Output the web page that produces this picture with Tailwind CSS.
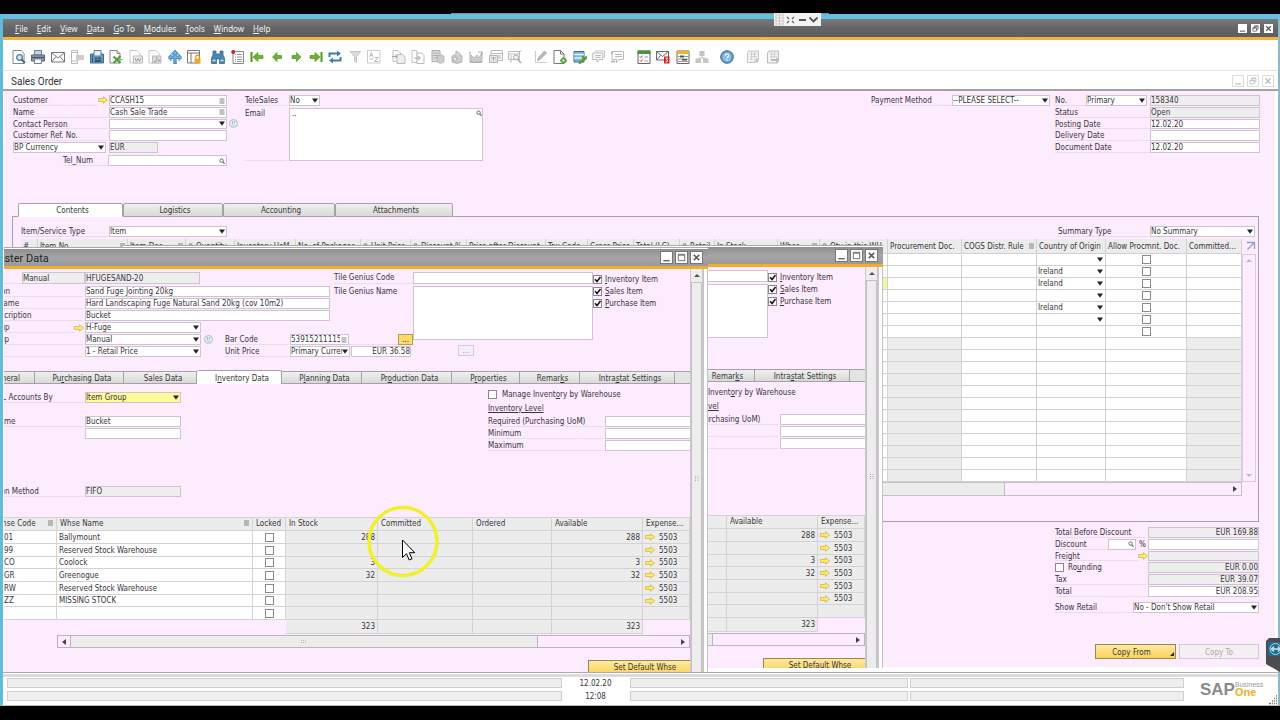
<!DOCTYPE html>
<html lang="en">
<head>
<meta charset="utf-8">
<title>Sales Order - SAP Business One</title>
<script src="https://cdn.jsdelivr.net/npm/@tailwindcss/browser@4"></script>
</head>
<body class="flex min-h-screen flex-col bg-black font-['DejaVu_Sans_Condensed','DejaVu_Sans',sans-serif] text-[8px] leading-[11px] text-[#3a343c]">

<svg class="hidden" aria-hidden="true">
  <symbol id="link" viewBox="0 0 10 8"><path d="M.5 2.500h5V.7L9.500 4 5.500 7.300V5.500h-5z" fill="#fbe96a" stroke="#d3b84a" stroke-width=".8"/></symbol>
  <symbol id="list" viewBox="0 0 5 6"><path d="M0 1h5M0 3h5M0 5h5" stroke="#777" stroke-width=".9"/></symbol>
  <symbol id="mag" viewBox="0 0 7 7"><circle cx="3" cy="3" r="2" fill="none" stroke="#555"/><path d="M4.500 4.500l2 2" stroke="#555" stroke-width="1.200"/></symbol>
  <symbol id="caret" viewBox="0 0 6 5"><path d="M0 .5h6L3 4.800z" fill="#222"/></symbol>
  <symbol id="tick" viewBox="0 0 9 9"><path d="M2 4.300l2 2.200 3.500-4.500" fill="none" stroke="#111" stroke-width="1.500"/></symbol>
  <symbol id="globe" viewBox="0 0 9 9"><circle cx="4.500" cy="4.500" r="4" fill="#e3eef7" stroke="#9cb3c8" stroke-width=".8"/><path d="M3.500 2v3.500M5.500 2v2.500M4 6.500h1.500" stroke="#9cb3c8" stroke-width=".9"/></symbol>
  <symbol id="min" viewBox="0 0 12 12"><path d="M2.500 9.500h7" stroke="#666" stroke-width="1.500"/></symbol>
  <symbol id="max" viewBox="0 0 12 12"><path d="M2.500 2.500h7v7h-7zM2.500 3.500h7" fill="none" stroke="#666"/></symbol>
  <symbol id="rest" viewBox="0 0 12 12"><path d="M2.500 5h5v4.500h-5zM4.500 5V2.500h5v4.500h-2M4.500 3h5M2.500 5.500h5" fill="none" stroke="#555"/></symbol>
  <symbol id="close" viewBox="0 0 12 12"><path d="M3 3l6 6M9 3l-6 6" stroke="#555" stroke-width="1.700"/></symbol>

  <symbol id="i-preview" viewBox="0 0 14 14"><path d="M1 .5h8.500l2.500 3v10H1z" fill="#fff" stroke="#888"/><circle cx="7.500" cy="7.500" r="2.800" fill="#cfe4f0" stroke="#4f7f9c" stroke-width="1.300"/><path d="M9.500 9.500l3.500 3.500" stroke="#3d6d8c" stroke-width="2"/></symbol>
  <symbol id="i-print" viewBox="0 0 14 14"><path d="M3.500.5h7V5h-7z" fill="#bcd9ef" stroke="#6a7f90"/><path d="M.5 5h13v6H.5z" fill="#9aa6b0" stroke="#59656f"/><path d="M1 7.500h12" stroke="#3f5668" stroke-width="1.500"/><path d="M3.500 9h7v4.500h-7z" fill="#fff" stroke="#6a7f90"/></symbol>
  <symbol id="i-mail" viewBox="0 0 14 14"><path d="M.5 2.500h13v9.500H.5zM.5 2.500L7 8l6.500-5.500M.5 12L5 6.500M13.500 12L9 6.500" fill="#fff" stroke="#777"/></symbol>
  <symbol id="i-sms" viewBox="0 0 14 14"><path d="M1.500.5h6v13h-6zM2 2.500h5M2 11h5" fill="#fff" stroke="#bbb"/><path d="M6 5h8v5H9l-2 2v-2H6z" fill="#ccc"/></symbol>
  <symbol id="i-fax" viewBox="0 0 14 14"><path d="M.5 4h13v9H.5z" fill="#6b9cc0" stroke="#3e6d8e"/><path d="M4 .5h7V6H4z" fill="#e8f1f7" stroke="#56809c"/><path d="M2.500 5v7M5 8h2v1H5zM8 8h3v1H8zM5 10.500h6v1H5z" stroke="#2f5873" fill="none"/></symbol>
  <symbol id="i-excel" viewBox="0 0 14 14"><path d="M1 .5h7l3 3v9.500H1z" fill="#fff" stroke="#888"/><path d="M8 .5v3h3" fill="none" stroke="#888"/><path d="M4.500 6.500l7 6.500M11.500 6l-7 7" stroke="#4f9d35" stroke-width="2"/><path d="M9 9.500h4.500" stroke="#7dbb62"/></symbol>
  <symbol id="i-word" viewBox="0 0 14 14"><path d="M1 .5h7l3 3v9.500H1z" fill="#fff" stroke="#c6c6c6"/><path d="M4.500 6h9v7h-9z" fill="#eee" stroke="#bbb"/><path d="M6 8l1.300 3.500L9 8.500l1.500 3L12 8" fill="none" stroke="#999"/></symbol>
  <symbol id="i-pdf" viewBox="0 0 14 14"><path d="M1 .5h7l3 3v9.500H1z" fill="#fff" stroke="#c6c6c6"/><path d="M4.500 6h8.500v7H4.500z" fill="#ddd" stroke="#bbb"/><path d="M6 12c2-1 3-3 2.500-5 .5 2 1.500 3.500 4 3.500-2 0-4 .3-6.500 1.500z" fill="#fff" stroke="#999" stroke-width=".8"/></symbol>
  <symbol id="i-launch" viewBox="0 0 14 14"><path d="M7 0l3.500 4H8.200v2H11V4.500l3 3-3 3V8.500H8.200V14H5.800V8.500H3v2l-3-3 3-3V6h2.800V4H3.500z" fill="#69b1e0" stroke="#2f78a8" stroke-width=".8"/></symbol>
  <symbol id="i-lock" viewBox="0 0 14 14"><path d="M.5.5h12v12.500H.5zM.5 3h12M4 3v10" fill="#fff" stroke="#777"/><path d="M7.500 8.500h6v5h-6z" fill="#f0a91f"/><path d="M8.800 8.500V6.800a1.700 1.700 0 013.400 0v1.700" fill="none" stroke="#e09a10" stroke-width="1.200"/></symbol>
  <symbol id="i-find" viewBox="0 0 14 14"><path d="M2 1h3v3h4V1h3v4l1.500 3v5.500H8.500V9h-3v4.500H.5V8L2 5z" fill="#4a87b5" stroke="#2c5f86" stroke-width=".7"/><path d="M1.500 10.500h3M9.500 10.500h3" stroke="#c9e0f0" stroke-width="1.500"/></symbol>
  <symbol id="i-rows" viewBox="0 0 14 14"><path d="M2 1.500h10.500v12H2z" fill="#fff" stroke="#888"/><path d="M4 4.500h1M6 4.500h5M4 7h1M6 7h5M4 9.500h1M6 9.500h5M4 11.500h1M6 11.500h5" stroke="#999"/><circle cx="2.200" cy="2" r="2" fill="#d02020"/></symbol>
  <symbol id="i-first" viewBox="0 0 14 14"><path d="M1.500 2v10" stroke="#4c9a1f" stroke-width="2"/><path d="M3 7l5-4.500v3h5v3H8v3z" fill="#6db52e" stroke="#43861c" stroke-width=".6"/></symbol>
  <symbol id="i-prev" viewBox="0 0 14 14"><path d="M2.500 7l4.500-4.500v3h4.500v3H7v3z" fill="#6db52e" stroke="#43861c" stroke-width=".6"/></symbol>
  <symbol id="i-next" viewBox="0 0 14 14"><path d="M12 7L7.500 2.500v3H3v3h4.500v3z" fill="#6db52e" stroke="#43861c" stroke-width=".6"/></symbol>
  <symbol id="i-last" viewBox="0 0 14 14"><path d="M12.500 2v10" stroke="#4c9a1f" stroke-width="2"/><path d="M11 7L6 2.500v3H1v3h5v3z" fill="#6db52e" stroke="#43861c" stroke-width=".6"/></symbol>
  <symbol id="i-cycle" viewBox="0 0 14 14"><path d="M1.500 7V3.500h8M12.500 7v3.500h-8" fill="none" stroke="#3f7ea8" stroke-width="2"/><path d="M9 .5l4 3-4 3zM5 7.500l-4 3 4 3z" fill="#3f7ea8"/></symbol>
  <symbol id="i-filter" viewBox="0 0 14 14"><path d="M2 1.500h10.500L8.500 6.500v6l-2-1.500V6.500z" fill="#ddd" stroke="#c2c2c2"/></symbol>
  <symbol id="i-sort" viewBox="0 0 14 14"><path d="M.5.5h12.500v12.500H.5z" fill="#fff" stroke="#ccc"/><path d="M2.500 7l1.800-4.500L6 7M3 5.500h2.500M7.500 7.500h4l-4 4h4M3 9h3" fill="none" stroke="#bbb"/></symbol>
  <symbol id="i-copyfrom" viewBox="0 0 14 14"><path d="M1 .5h5l2.500 2.500v8.500H1z" fill="#fff" stroke="#bbb"/><path d="M5 4.500h5.500l2.500 2.500v6.500H5z" fill="#eee" stroke="#bbb"/><path d="M0 6.500h5M3 4.500l2.500 2L3 8.500" fill="none" stroke="#aaa"/></symbol>
  <symbol id="i-copyto" viewBox="0 0 14 14"><path d="M1 .5h5v12H1z" fill="#fff" stroke="#c4c4c4"/><path d="M6 3h4.500l2.500 2.500v8H6z" fill="#fff" stroke="#bbb"/><path d="M3 8h6M7 6l2.500 2L7 10" fill="none" stroke="#aaa"/></symbol>
  <symbol id="i-calc" viewBox="0 0 14 14"><path d="M1 .5h8v11H1z" fill="#ddd" stroke="#aaa"/><path d="M2.500 3h5M2.500 5.500h5M2.500 8h5" stroke="#aaa"/><path d="M6 6l3.500-1.500L13 6v6l-3.500 1.500L6 12z" fill="#ccc" stroke="#aaa" stroke-width=".7"/></symbol>
  <symbol id="i-bag" viewBox="0 0 14 14"><path d="M2 6l5-2 5 2v6l-5 1.500L2 12z" fill="#ccc" stroke="#b5b5b5"/><path d="M6 4.500V1l4 2.500v3" fill="#ddd" stroke="#b0b0b0" stroke-width="1"/><circle cx="5" cy="9" r="2" fill="#eee" stroke="#aaa"/></symbol>
  <symbol id="i-chart" viewBox="0 0 14 14"><path d="M1 1.500v11h12" fill="none" stroke="#aaa"/><path d="M2 5l3 3 3-3 2 3 3-6v10H2z" fill="#ccc" stroke="#b0b0b0" stroke-width=".8"/><path d="M9 2h4v3" fill="none" stroke="#aaa"/></symbol>
  <symbol id="i-grid" viewBox="0 0 14 14"><path d="M2 .5h11.500v10H2zM2 3.500h11.500" fill="#fff" stroke="#bbb"/><path d="M.5 5.500h8v7h-8z" fill="#e5e5e5" stroke="#b5b5b5"/><path d="M9 6h3M9 8h3M2 8h5M4.500 7v4" stroke="#aaa"/></symbol>
  <symbol id="i-query" viewBox="0 0 14 14"><path d="M.5 1.500h11v8H.5zM.5 4h11" fill="#fff" stroke="#bbb"/><path d="M3 5v8M10 2l3.500-1" stroke="#bbb"/><circle cx="8" cy="7.500" r="2.500" fill="#eee" stroke="#aaa"/><path d="M10 9.500l3 3.500" stroke="#aaa" stroke-width="1.600"/></symbol>
  <symbol id="i-edit" viewBox="0 0 14 14"><path d="M1.500 1v11.500H13" fill="none" stroke="#ccc"/><path d="M3.500 10.500l1-3L10.500 1l2 2-6.500 6.500z" fill="#bbb" stroke="#999" stroke-width=".7"/></symbol>
  <symbol id="i-docset" viewBox="0 0 14 14"><path d="M1 .5h6.500L11 4v9.500H1z" fill="#fff" stroke="#777"/><path d="M7.500.5V4H11" fill="none" stroke="#777"/><circle cx="10.500" cy="10.500" r="2" fill="#fff" stroke="#57a832" stroke-width="1.800"/><path d="M10.500 7v1.500M10.500 12.500V14M7 10.500h1.500M12.500 10.500H14" stroke="#57a832" stroke-width="1.300"/></symbol>
  <symbol id="i-dbtool" viewBox="0 0 14 14"><path d="M1 1.500h10v10.500H1z" fill="#7db4dc" stroke="#37719c"/><path d="M1 4.500h10M1 8h10" stroke="#e4f0f9" stroke-width="1.300"/><path d="M5.500 13l4-4V6.500l2 1 2-1.500v3l-2.500 1.500L7 14z" fill="#57a832" stroke="#34791a" stroke-width=".5"/></symbol>
  <symbol id="i-chat" viewBox="0 0 14 14"><path d="M2.500 1h10v6.500h-1" fill="none" stroke="#c4c4c4"/><path d="M.8 3h10v6.500H7l-2 2.500V9.500H.8zM3 5.500h6M3 7.300h6" fill="#fff" stroke="#b8b8b8"/></symbol>
  <symbol id="i-chat2" viewBox="0 0 14 14"><path d="M1 1.500h11.500v8H8l-2.500 3v-3H1zM4 4.500h7M4 6.500h7" fill="#fff" stroke="#bbb"/><path d="M0 11.500h4M0 3h2" stroke="#aaa" stroke-width="1.300"/></symbol>
  <symbol id="i-tasks" viewBox="0 0 14 14"><path d="M1 1h12v12.500H1z" fill="#fff" stroke="#666"/><path d="M.5.5h13v3.500H.5z" fill="#4d9138"/><path d="M3 6.500l1 1 1.500-2M3 10.500l1 1 1.500-2" fill="none" stroke="#c33" stroke-width=".9"/><path d="M7.500 7H11M7.500 11H11" stroke="#999"/></symbol>
  <symbol id="i-mailred" viewBox="0 0 14 14"><path d="M.5 1.500h12v8.500H.5zM.5 1.500l6 5 6-5M.5 10l4-4.500" fill="#fff" stroke="#666"/><path d="M8 6.500h5.500v7H8z" fill="#cc1f1f"/><path d="M9.500 8h2l-1 1.500 1 .5-.5 2H9.500" fill="none" stroke="#fff" stroke-width=".9"/></symbol>
  <symbol id="i-cal" viewBox="0 0 14 14"><path d="M1 1h12v12.500H1z" fill="#fff" stroke="#666"/><path d="M1 1h12v3H1z" fill="#f0b429"/><path d="M2 6.500h10M2 9h10M2 11.500h10" stroke="#999"/><path d="M4 5.500h4v2H4zM6 9h5v1.500H6z" fill="#555"/></symbol>
  <symbol id="i-org" viewBox="0 0 14 14"><path d="M4.500 1h5v5h-5zM.5 8.500h5.500v4.500H.5zM8 8.500h5.500v4.500H8z" fill="#c4c4c4"/><path d="M7 6v2M3 8h8" stroke="#c4c4c4"/></symbol>
  <symbol id="i-help" viewBox="0 0 14 14"><circle cx="7" cy="7" r="6.300" fill="#5f9ad0" stroke="#3b6c99"/><circle cx="7" cy="7" r="4.500" fill="#8fbce3"/><path d="M5.300 5.500c0-2 3.400-2 3.400 0C8.700 7 7 6.800 7 8.300M7 9.500v1.300" fill="none" stroke="#fff" stroke-width="1.200"/></symbol>
  <symbol id="i-doca" viewBox="0 0 14 14"><path d="M3 1h9.500v8L9 12.500H1.500V3z" fill="#f3f3f3" stroke="#c4c4c4"/><path d="M4 4h7M4 6.500h7M4 9h3M5.500 2v8M8.500 2v6" stroke="#d0d0d0"/><circle cx="10.500" cy="10.500" r="2.300" fill="#ccc"/></symbol>
  <symbol id="i-docb" viewBox="0 0 14 14"><path d="M3 1h9.500v10.500L11 13H1.500V3z" fill="#f3f3f3" stroke="#bbb"/><path d="M4 4h7M4 6.500h7M5.500 2v8M8.500 2v6" stroke="#d0d0d0"/><path d="M5 9h5V7l3.500 3-3.500 3v-2H5z" fill="#bbb"/></symbol>
</svg>

<div class="relative mt-[14px] flex flex-col border-t-[5px] border-r-2 border-b border-l-[3px] border-t-[#62c1e3] border-r-[#8db9c8] border-b-[#bbb] border-l-[#62bcd9] bg-white">

  <!-- Remote session handle -->
  <div class="absolute -top-[6px] left-[448px] h-px w-[378px] bg-[#8a8a8a]"></div>
  <div class="absolute -top-[6px] left-[771px] flex h-[13px] w-[47px] items-center bg-[#f2f2f2]">
    <svg class="h-[13px] w-full" viewBox="0 0 47 13" fill="none"><path d="M1 2h9M1 5h9M1 8h9M1 11h9M2 0v13M5.500 0v13M9 0v13" stroke="#ccc"/><path d="M13 4l2 2M20 4l-2 2M13 10l2-2M20 10l-2-2" stroke="#666" stroke-width="1.300"/><path d="M25 7h7" stroke="#555" stroke-width="2"/><path d="M35.500 4.500l4 4 4-4" stroke="#555" stroke-width="1.800"/></svg>
  </div>

  <!-- Menu bar -->
  <header class="flex h-[21px] items-center border-b-[3px] border-[#f3b531] bg-linear-to-b from-[#7a7a7a] via-[#656565] to-[#5e5c60] pr-[5px] pl-3 font-['Noto_Sans',sans-serif] text-[8px] text-[#f2f2f2]">
    <nav id="menu" class="flex gap-[9px]"></nav>
    <div id="appctl" class="ml-auto flex gap-1"></div>
  </header>

  <!-- Toolbar -->
  <div id="toolbar" class="flex h-[31px] items-center border-b border-[#e4e4e4] pt-[3px] pl-[9px]"></div>

  <!-- Document caption -->
  <div class="flex h-5 items-center border-b-2 border-[#a3a0a4] pr-1 pl-2">
    <h1 class="pt-1 font-[Roboto,sans-serif] text-[10px] leading-4 text-[#333]">Sales Order</h1>
    <div id="docctl" class="ml-auto flex gap-[3px] pt-px"></div>
  </div>

  <!-- Desktop -->
  <main id="desktop" class="relative overflow-hidden border-r-[3px] border-l border-white bg-[#fdebfe]"></main>

  <!-- Status bar -->
  <footer class="grid grid-cols-[2fr_68px_1fr_1fr_90px] border-t border-[#a9a9a9] bg-white pt-px text-[8px]">
    <div class="col-span-5 h-[3px] bg-[#dddbdd]"></div>
    <div class="mt-px ml-1 flex flex-col gap-[3px] pb-1"><div class="h-[10px] border border-[#cfcfcf] bg-[#eee]"></div><div class="h-[10px] border border-[#cfcfcf] bg-[#eee]"></div></div>
    <div class="flex flex-col text-center leading-[13px]"><div>12.02.20</div><div>12:08</div></div>
    <div class="mt-px mr-px flex flex-col gap-[3px]"><div class="h-[10px] border border-[#cfcfcf] bg-[#eee]"></div><div class="h-[10px] border border-[#cfcfcf] bg-[#eee]"></div></div>
    <div class="mt-px mr-1 ml-px flex flex-col gap-[3px]"><div class="h-[10px] border border-[#cfcfcf] bg-[#eee]"></div><div class="h-[10px] border border-[#cfcfcf] bg-[#eee]"></div></div>
    <div class="relative flex items-center pb-1 pl-3 font-['Liberation_Sans',sans-serif]">
      <span class="text-[17px] leading-none font-bold text-[#8b8b8b]">SAP</span>
      <span class="flex flex-col text-[#999]"><span class="text-[7px] leading-[6px]">Business</span><span class="text-[11px] leading-[9px] font-bold text-[#efae2c]">One</span></span>
      <svg class="absolute right-0 bottom-0 h-[10px] w-[10px]" viewBox="0 0 10 10"><path d="M8 1h1M6 3.500h1M8 3.500h1M4 6h1M6 6h1M8 6h1M1 8.500h2M4 8.500h1M6 8.500h1M8 8.500h1" stroke="#777" stroke-width="1.500"/></svg>
    </div>
  </footer>

  <!-- Remote support tab -->
  <button type="button" aria-label="Remote support" class="absolute top-[619px] -right-[2px] h-[34px] w-[14px]">
    <svg class="h-full w-full" viewBox="0 0 14 34"><path d="M3 0h11v34L0 26V3z" fill="#4c4c4e"/><path d="M2 4h12v14H2z" fill="#1f6c93"/><circle cx="9.500" cy="11" r="5.500" fill="none" stroke="#b9d3e0"/><path d="M5 11h9M8 8.500L5.500 11 8 13.500M12 8.500l2 2.500-2 2.500" stroke="#cfe3ee" stroke-width="1.400" fill="none"/></svg>
  </button>

  <!-- Pointer highlight -->
  <svg class="pointer-events-none absolute top-[486px] left-[364px] h-[74px] w-[74px]" viewBox="0 0 74 74"><circle cx="36" cy="36.500" r="34" fill="none" stroke="#f1f02a" stroke-width="3.500"/><path d="M35.500 35v17.500l4-3.800 2.700 6.300 2.800-1.200-2.700-6.100h5.500z" fill="#fff" stroke="#000"/></svg>
</div>

<script>
const icon = (id, cls) => `<svg class="${cls}" aria-hidden="true"><use href="#${id}"/></svg>`;
const label = (t, cls) => `<span class="border-b border-[#ecdaee] leading-[11px] whitespace-nowrap ${cls}">${t}</span>`;
const input = (v, cls, name) => `<input type="text" value="${v}" aria-label="${name}" class="h-full min-w-0 border border-[#cfc3d1] text-[8px] leading-none outline-none ${cls}">`;
const pick = (v, cls, name) => `<span class="grid h-full grid-cols-[100%] grid-rows-[100%] inset-ring ${cls}"><select aria-label="${name}" class="col-start-1 row-start-1 h-full w-full min-w-0 appearance-none pr-2 pl-px text-[8px] leading-[11px] outline-none"><option>${v}</option></select>${icon('caret', 'pointer-events-none col-start-1 row-start-1 mr-[2px] h-[5px] w-[6px] self-center justify-self-end')}</span>`;
const withIcon = (v, ic, cls, name) => `<span class="grid h-full ${cls}">${input(v, 'col-start-1 row-start-1 w-full bg-white pr-2', name)}${icon(ic, 'pointer-events-none col-start-1 row-start-1 mr-[2px] h-[6px] w-[6px] self-center justify-self-end')}</span>`;
const check = (name, on) => `<span class="grid h-[9px] w-[9px] shrink-0"><input type="checkbox" aria-label="${name}" ${on ? 'checked' : ''} class="col-start-1 row-start-1 h-[9px] w-[9px] appearance-none border border-[#8b878c] bg-white">${on ? icon('tick', 'pointer-events-none col-start-1 row-start-1 h-[9px] w-[9px]') : ''}</span>`;
const u = (s) => s.replace(/_(.)/, '<u>$1</u>');
const white = 'inset-ring-[#cfc3d1] bg-white';

document.getElementById('menu').innerHTML = ['_File', '_Edit', '_View', '_Data', '_Go To', '_Modules', '_Tools', '_Window', '_Help']
  .map(m => `<button type="button">${u(m)}</button>`).join('');
document.getElementById('appctl').innerHTML = [['min', 'Minimize'], ['rest', 'Restore'], ['close', 'Close']]
  .map(([i, n]) => `<button type="button" aria-label="${n}" class="bg-white">${icon(i, 'h-[9px] w-[9px]')}</button>`).join('');
document.getElementById('docctl').innerHTML = [['min', 'Minimize'], ['rest', 'Restore'], ['close', 'Close']]
  .map(([i, n]) => `<button type="button" aria-label="${n} document" class="border border-[#ddd] bg-white">${icon(i, 'h-[10px] w-[10px] opacity-40')}</button>`).join('');

const tools = [
  ['w-[189px]', 'preview print mail sms fax excel word pdf launch lock'],
  ['ml-[10px] w-[170px]', 'find rows first prev next last cycle filter sort'],
  ['ml-[11px] w-[130px]', 'copyfrom copyto calc bag chart grid query'],
  ['ml-[12px] w-[91px]', 'edit docset dbtool chat chat2'],
  ['ml-[12px] w-[72px]', 'tasks mailred cal org'],
  ['ml-[11px] w-[14px]', 'help'],
  ['ml-[12px] w-[34px]', 'doca docb'],
];
document.getElementById('toolbar').innerHTML = tools.map(([c, l]) => `<div class="flex justify-between ${c}">${l.split(' ')
  .map(i => `<button type="button" aria-label="${i}">${icon('i-' + i, 'h-[14px] w-[14px]')}</button>`).join('')}</div>`).join('');

/* ---- Sales order document ---- */
const head = `
<section class="flex items-start pt-1 pr-[15px] pl-[9px]">
  <div class="w-[232px]">
    <div class="grid h-[58px] grid-rows-5 gap-px">
      <div class="flex">${label('Customer', 'w-[85px]')}${icon('link', 'mr-px h-[8px] w-[10px] self-center')}${withIcon('CCASH15', 'list', 'w-[118px]', 'Customer')}</div>
      <div class="flex">${label('Name', 'mr-[2px] w-[94px]')}${withIcon('Cash Sale Trade', 'list', 'w-[118px]', 'Name')}</div>
      <div class="flex">${label('Contact Person', 'mr-[2px] w-[94px]')}${pick('', 'w-[118px] ' + white, 'Contact Person')}${icon('globe', 'ml-[2px] h-[9px] w-[9px] self-center')}</div>
      <div class="flex">${label('Customer Ref. No.', 'mr-[2px] w-[94px]')}${input('', 'w-[118px] bg-white', 'Customer Ref. No.')}</div>
      <div class="flex">${pick('BP Currency', 'mr-[3px] w-[93px] ' + white, 'Currency source')}${input('EUR', 'w-[49px] bg-[#eee]', 'Currency')}</div>
    </div>
    <div class="mt-[2px] flex h-[11px]">${label('Tel_Num', 'mr-px ml-[50px] w-[44px]')}${withIcon('', 'mag', 'w-[119px]', 'Tel_Num')}</div>
  </div>
  <div class="w-[238px]">
    <div class="flex h-[11px]">${label('TeleSales', 'mr-[2px] w-[42px]')}${pick('No', 'w-[31px] ' + white, 'TeleSales')}</div>
    <div class="mt-[2px] flex h-[53px]">${label('Email', 'mr-[2px] w-[42px]')}
      <span class="grid w-[194px]"><textarea aria-label="Email" class="col-start-1 row-start-1 resize-none border border-[#cfc3d1] bg-white px-[2px] text-[8px] leading-[9px] outline-none">..</textarea>${icon('mag', 'pointer-events-none col-start-1 row-start-1 mt-[2px] mr-px h-[6px] w-[6px] justify-self-end')}</span></div>
  </div>
  <div class="ml-auto grid h-[58px] grid-rows-5 gap-px">
    <div class="flex">${label('Payment Method', 'w-[81px]')}${pick('--PLEASE SELECT--', 'mr-[5px] w-[98px] ' + white, 'Payment Method')}${label('No.', 'w-[31px]')}${pick('Primary', 'mr-[3px] w-[61px] ' + white, 'Series')}${input('158340', 'w-[110px] bg-[#eee]', 'No.')}</div>
    ${[['Status', 'Open', 'bg-[#eee]'], ['Posting Date', '12.02.20', 'bg-white'], ['Delivery Date', '', 'bg-white'], ['Document Date', '12.02.20', 'bg-white']]
      .map(([l, v, c]) => `<div class="flex justify-end">${label(l, 'w-[95px]')}${input(v, 'w-[110px] ' + c, l)}</div>`).join('')}
  </div>
</section>`;

const cols = [['#', 17], ['Item No.', 90, 'list'], ['Item Des', 58, 'list'], ['Quantity', 49, 'mag'], ['Inventory UoM', 61], ['No. of Packages', 65], ['Unit Price', 50, 'mag'], ['Discount %', 56, 'mag'], ['Price after Discount', 79], ['Tax Code', 42], ['Gross Price', 46], ['Total (LC)', 46], ['Retail', 35, 'mag'], ['In Stock', 63], ['Whse', 42, 'list'], ['Qty in this WH', 68, 'mag'], ['Procurement Doc.', 74], ['COGS Distr. Rule', 75, 'list'], ['Country of Origin', 69], ['Allow Procmnt. Doc.', 81], ['Committed...', 55]];
const countries = ['', 'Ireland', 'Ireland', '', 'Ireland', ''];
const cell = 'border-r border-b border-[#d3d0d4] p-0';
let rows = '';
for (let r = 0; r < 19; r++) {
  const used = r < 7;
  rows += `<tr class="h-[12px]">` +
    `<td colspan="15" class="${cell} bg-white"></td>` +
    `<td class="${cell} ${r === 2 ? 'bg-[#f4f7a0]' : 'bg-white'}"></td>` +
    `<td class="${cell} ${used ? 'bg-white' : 'bg-[#ececec]'}"></td>` +
    `<td class="${cell} bg-white"></td>` +
    `<td class="${cell} bg-white">${r < 6 ? `<div class="h-[11px]">${pick(countries[r], 'inset-ring-transparent', 'Country of Origin')}</div>` : ''}</td>` +
    `<td class="${cell} bg-white">${used ? `<div class="flex justify-center">${check('Allow Procurement Document')}</div>` : ''}</td>` +
    `<td class="${cell} ${used ? 'bg-white' : 'bg-[#ececec]'}"></td></tr>`;
}
const tab = (t, w, on) => `<button type="button" role="tab" aria-selected="${!!on}" class="${w} ${on ? 'border-b-transparent bg-white' : 'border-b-[#a79fa9] bg-linear-to-b from-[#efefef] to-[#d9dad8]'} h-[14px] rounded-t-[2px] border border-[#a79fa9] pt-[2px] pl-1 text-center leading-[10px]">${t}</button>`;
const body = `
<section class="mt-[37px] pr-4 pl-2">
  <div role="tablist" class="flex">
    <span class="w-[6px] border-b border-[#a79fa9]"></span>
    ${tab('Contents', 'w-[105px]', true)}${tab('Logistics', 'w-[100px]')}${tab('Accounting', 'w-[112px]')}${tab('Attachments', 'w-[118px]')}
    <span class="flex-1 border-b border-[#a79fa9]"></span>
  </div>
  <div class="border-r border-b border-l border-[#a79fa9] pt-[9px] pb-[25px] pl-2">
    <div class="flex h-[11px] pr-[3px]">${label('Item/Service Type', 'mr-px w-[87px]')}${pick('Item', 'w-[118px] ' + white, 'Item/Service Type')}
      ${label('Summary Type', 'mr-[2px] ml-auto w-[90px]')}${pick('No Summary', 'w-[105px] ' + white, 'Summary Type')}</div>
    <div class="mt-[2px] flex">
      <div class="w-[1221px] shrink-0 overflow-hidden">
        <table class="w-full table-fixed border-separate border-spacing-0">
          <colgroup>${cols.map(c => `<col style="width:${c[1]}px">`).join('')}</colgroup>
          <thead><tr class="h-[15px] bg-[#ececec]">${cols.map(c => `<th class="border-r border-b border-[#d3d0d4] p-0 font-normal"><div class="flex h-[11px] items-center gap-[2px] overflow-hidden px-[2px] whitespace-nowrap">${c[2] === 'mag' ? icon('mag', 'h-[6px] w-[6px] shrink-0') : ''}<span>${c[0]}</span>${c[2] === 'list' ? icon('list', 'ml-auto h-[6px] w-[5px] shrink-0') : ''}</div></th>`).join('')}</tr></thead>
          <tbody>${rows}</tbody>
        </table>
        <div class="flex h-[14px] border border-[#c9bccb]"><span class="w-[983px] border-r border-[#c3bac5] bg-[#ececec]"></span><svg class="mr-1 ml-auto h-[6px] w-[4px] self-center" viewBox="0 0 4 6"><path d="M0 0v6l4-3z" fill="#444"/></svg></div>
      </div>
      <div class="flex flex-1 flex-col pr-[3px]">
        <svg class="ml-1 h-[15px] w-[10px] pt-[1px]" viewBox="0 0 10 14"><path d="M1 2.500h7.500V9M8 3L1.500 9.500" fill="none" stroke="#86a4c4" stroke-width="1.300"/></svg>
        <div class="flex h-[228px] flex-col items-center justify-between border border-[#dccbde] py-1">
          <svg class="h-[3px] w-[6px]" viewBox="0 0 6 3"><path d="M0 3h6L3 0z" fill="#bbb"/></svg>
          <svg class="h-[3px] w-[6px]" viewBox="0 0 6 3"><path d="M0 0h6L3 3z" fill="#bbb"/></svg>
        </div>
      </div>
    </div>
  </div>
</section>`;

const ro = 'ml-auto w-[111px] bg-[#eee] text-right';
const totals = `
<section class="ml-auto w-[220px] pt-[5px] pr-4 pb-2">
  <div class="grid h-[70px] grid-rows-6 gap-px">
    <div class="flex">${label('Total Before Discount', 'w-[92px]')}${input('EUR 169.88', ro, 'Total Before Discount')}</div>
    <div class="flex">${label('Discount', 'w-[53px]')}${withIcon('', 'mag', 'w-[28px]', 'Discount percent')}<span class="ml-[3px]">%</span>${input('', 'ml-auto w-[111px] bg-white', 'Discount')}</div>
    <div class="flex">${label('Freight', 'w-[83px]')}${icon('link', 'h-[8px] w-[10px] self-center')}${input('', ro, 'Freight')}</div>
    <div class="flex"><label class="flex items-center gap-1">${check('Rounding')}<span>Ro<u>u</u>nding</span></label>${input('EUR 0.00', ro, 'Rounding')}</div>
    <div class="flex">${label('Tax', 'w-[92px]')}${input('EUR 39.07', ro, 'Tax')}</div>
    <div class="flex">${label('Total', 'w-[92px]')}${input('EUR 208.95', 'ml-auto w-[111px] bg-white text-right', 'Total')}</div>
  </div>
  <div class="mt-[5px] flex h-[11px]">${label('Show Retail', 'w-[78px]')}${pick("No - Don't Show Retail", 'w-[126px] ' + white, 'Show Retail')}</div>
  <div class="mt-[31px] flex justify-end gap-[3px]">
    <button type="button" class="relative h-[15px] w-[81px] border border-[#9b8650] bg-linear-to-b from-[#fde9a0] to-[#fbd257] pt-px pr-2 leading-[11px]">Copy From<svg class="absolute right-[1px] bottom-[2px] h-[4px] w-[4px]" viewBox="0 0 4 4"><path d="M4 0v4H0z" fill="#222"/></svg></button>
    <button type="button" disabled class="h-[15px] w-[80px] border border-[#cfcacf] bg-[#f3f0f3] pt-px leading-[11px] text-[#aaa]">Copy To</button>
  </div>
</section>
<div class="h-[5px] bg-white"></div>`;

/* ---- Item master data window ---- */
const stock = [['01', 'Ballymount', '288', '288'], ['99', 'Reserved Stock Warehouse', '', ''], ['CO', 'Coolock', '3', '3'], ['GR', 'Greenogue', '32', '32'], ['RW', 'Reserved Stock Warehouse', '', ''], ['ZZ', 'MISSING STOCK', '', ''], ['', '', '', '']];
const wcols = [['', 44], ['Whse Code', 65, 'list'], ['Whse Name', 196, 'list'], ['Locked', 33], ['In Stock', 92], ['Committed', 95], ['Ordered', 79], ['Available', 91], ['Expense...', 47]];
const wt = (t, w, on) => `<button type="button" role="tab" aria-selected="${!!on}" class="${w} ${on ? 'rounded-t-[2px] bg-white' : 'mt-px border-b border-b-[#a79fa9] bg-linear-to-b from-[#efefef] to-[#d9dad8]'} shrink-0 border-t border-r border-[#a79fa9] pt-px pl-[6px] text-center leading-[11px] whitespace-nowrap">${u(t)}</button>`;
const gray = 'border-r border-b border-[#d3d3d3] bg-[#ececec] px-[2px] py-0';
const itemWindow = (place) => `
<section aria-label="Item Master Data" class="absolute flex w-[760px] flex-col overflow-hidden border-t border-[#aaa] bg-white pt-px ${place}">
  <div class="flex h-5 shrink-0 items-center border-b-[3px] border-[#f3ac2e] bg-linear-to-b from-[#8f8f8f] via-[#a5a5a5] to-[#9a9a9a] pr-[5px] pl-4">
    <h2 class="pt-[2px] font-[Roboto,sans-serif] text-[11px] leading-4 text-[#222]">Item Master Data</h2>
    <div class="ml-auto flex gap-[2px]">${[['min', 'Minimize'], ['max', 'Maximize'], ['close', 'Close']].map(([i, n]) => `<button type="button" aria-label="${n} window" class="border border-[#777] bg-white">${icon(i, 'h-[11px] w-[11px]')}</button>`).join('')}</div>
  </div>
  <div class="flex flex-1">
    <div class="w-[742px] overflow-hidden bg-[#fdebfe]">
      <div class="flex pt-[3px] pl-4">
        <div class="w-[449px]">
          <div class="flex h-[12px]">${label('Item No.', 'w-[58px]')}${input('Manual', 'w-[63px] bg-[#eee]', 'Numbering')}${input('HFUGESAND-20', 'w-[115px] bg-[#eee]', 'Item No.')}${label('Tile Genius Code', 'ml-[134px] w-[79px]')}</div>
          <div class="mt-[2px] grid h-[71px] grid-rows-6 gap-px">
            <div class="flex">${label('Description', 'mr-[2px] ml-[5px] w-[114px]')}${input('Sand Fuge Jointing 20kg', 'w-[245px] bg-white', 'Description')}<span class="ml-1">Tile Genius Name</span></div>
            <div class="flex">${label('Foreign Name', 'mr-[2px] ml-[5px] w-[114px]')}${input('Hard Landscaping Fuge Natural Sand 20kg (cov 10m2)', 'w-[245px] bg-white', 'Foreign Name')}</div>
            <div class="flex">${label('Sales Description', 'mr-[2px] ml-[5px] w-[114px]')}${input('Bucket', 'w-[245px] bg-white', 'Sales Description')}</div>
            <div class="flex">${label('Item Group', 'ml-[5px] w-[105px]')}${icon('link', 'mr-px h-[8px] w-[10px] self-center')}${pick('H-Fuge', 'w-[116px] ' + white, 'Item Group')}</div>
            <div class="flex">${label('UoM Group', 'mr-[2px] ml-[5px] w-[114px]')}${pick('Manual', 'w-[116px] ' + white, 'UoM Group')}${icon('globe', 'mr-3 ml-[3px] h-[9px] w-[9px] self-center')}${label('Bar Code', 'mr-[2px] w-[63px]')}${withIcon('539152111159', 'list', 'w-[59px]', 'Bar Code')}<span class="flex-1 border-b border-[#ecdaee]"></span><button type="button" class="h-full w-[15px] border border-[#b39d55] bg-[#fbd96b] leading-[7px]">...</button></div>
            <div class="flex">${label('Price List', 'mr-[2px] w-[119px]')}${pick('1 - Retail Price', 'mr-6 w-[116px] ' + white, 'Price List')}${label('Unit Price', 'mr-[2px] w-[63px]')}${pick('Primary Currency', 'mr-px w-[60px] ' + white, 'Price currency')}${input('EUR 36.58', 'w-[60px] bg-white text-right', 'Unit Price')}</div>
          </div>
        </div>
        <div class="w-[180px]">
          <div class="h-[12px]">${input('', 'w-full bg-white', 'Tile Genius Code')}</div>
          <textarea aria-label="Tile Genius Name" class="mt-[2px] block h-[54px] w-full resize-none border border-[#cfc3d1] bg-white outline-none"></textarea>
          <button type="button" disabled class="mt-[5px] ml-[45px] block h-[11px] w-[16px] border border-[#d6ccd8] bg-[#f3eef3] leading-[6px] text-[#999]">...</button>
        </div>
        <div class="flex flex-col gap-[3px] pt-[3px]">
          ${['_Inventory Item', '_Sales Item', '_Purchase Item'].map(t => `<label class="flex h-[9px] items-center gap-[3px]">${check(t.slice(1), true)}<span>${u(t)}</span></label>`).join('')}
        </div>
      </div>
      <div role="tablist" class="mt-[13px] flex h-[14px]">
        <button type="button" role="tab" aria-selected="false" class="mt-px w-[87px] shrink-0 border-y border-r border-[#a79fa9] bg-linear-to-b from-[#efefef] to-[#d9dad8] pt-px pr-[14px] text-right leading-[11px]">General</button>
        ${wt('Pu_rchasing Data', 'w-[89px]')}${wt('Sales Data', 'w-[73px]')}${wt('I_nventory Data', 'w-[85px]', true)}${wt('P_lanning Data', 'w-[80px]')}${wt('Pr_oduction Data', 'w-[90px]')}${wt('P_roperties', 'w-[68px]')}${wt('Remar_ks', 'w-[60px]')}${wt('Intra_stat Settings', 'w-[95px]')}
        <span class="mt-px flex-1 border-y border-[#a79fa9] bg-[#e4e4e3]"></span>
      </div>
      <div class="flex h-[133px] pl-4">
        <div class="w-[524px] shrink-0 pt-2">
          <div class="flex h-[11px]">${label('Set G/L Accounts By', 'mr-[2px] ml-4 w-[103px]')}${pick('Item Group', 'w-[96px] inset-ring-[#cfc3d1] bg-[#fdfb9b]', 'Set G/L Accounts By')}</div>
          <div class="mt-[13px] flex h-[11px]">${label('UoM Name', 'mr-[2px] ml-3 w-[107px]')}${input('Bucket', 'w-[96px] bg-white', 'UoM Name')}</div>
          <div class="mt-px ml-[121px] h-[11px]">${input('', 'w-[96px] bg-white', 'UoM Name 2')}</div>
          <div class="mt-[47px] flex h-[11px]">${label('Valuation Method', 'mr-[2px] ml-3 w-[107px]')}${input('FIFO', 'w-[96px] bg-[#eee]', 'Valuation Method')}</div>
        </div>
        <div class="min-w-0 flex-1 pt-[6px]">
          <label class="flex h-[9px] items-center gap-[5px] whitespace-nowrap">${check('Manage Inventory by Warehouse')}<span>Manage Invent<u>o</u>ry by Warehouse</span></label>
          <div class="mt-1 mb-[2px]"><u>Inventory Level</u></div>
          ${['Required (Purchasing UoM)', 'Minimum', 'Maximum'].map(t => `<div class="mb-px flex h-[11px]">${label(t, 'mr-[2px] w-[115px] shrink-0')}${input('', 'flex-1 border-r-0 bg-white', t)}</div>`).join('')}
        </div>
      </div>
      <table class="w-full table-fixed border-separate border-spacing-0">
        <colgroup>${wcols.map(c => `<col style="width:${c[1]}px">`).join('')}</colgroup>
        <thead><tr class="h-[14px] bg-[#ececec]">${wcols.map(c => `<th class="border-t border-r border-b border-[#d3d3d3] p-0 pb-[2px] font-normal"><div class="flex h-[10px] items-center justify-between px-[3px] whitespace-nowrap"><span>${c[0]}</span>${c[2] ? icon('list', 'h-[6px] w-[5px]') : ''}</div></th>`).join('')}</tr></thead>
        <tbody>
          ${stock.map(([c, n, s, a]) => `<tr class="h-[13px] nth-[3n]:h-[12px]"><td class="border-b border-[#d3d3d3] bg-white p-0"></td><td class="border-r border-b border-[#d3d3d3] bg-white py-0 pr-0 pl-[12px]">${c}</td><td class="border-r border-b border-[#d3d3d3] bg-white px-[2px] py-0">${n}</td><td class="border-r border-b border-[#d3d3d3] bg-white p-0"><div class="flex justify-center">${check('Locked')}</div></td><td class="${gray} text-right">${s}</td><td class="${gray}"></td><td class="${gray}"></td><td class="${gray} text-right">${a}</td><td class="${gray}">${c ? `<div class="flex items-center gap-1">${icon('link', 'h-[8px] w-[10px]')}<a href="#">5503</a></div>` : ''}</td></tr>`).join('')}
          <tr class="h-[14px]"><td colspan="4" class="p-0"></td><td class="${gray} text-right">323</td><td class="${gray}"></td><td class="${gray}"></td><td class="${gray} text-right">323</td><td class="p-0"></td></tr>
        </tbody>
      </table>
      <div class="mt-px ml-[109px] flex h-[13px] items-center border border-[#bdb3bf]">
        <svg class="mx-1 h-[6px] w-[4px]" viewBox="0 0 4 6"><path d="M4 0v6L0 3z" fill="#444"/></svg>
        <span class="flex h-full w-[468px] items-center justify-center border-x border-[#bdb3bf] bg-[#ececec]"><svg class="h-[4px] w-[6px]" viewBox="0 0 6 4"><path d="M0 .5h6M0 2.500h6" stroke="#bbb" stroke-dasharray="1 1"/></svg></span>
        <svg class="mr-1 ml-auto h-[6px] w-[4px]" viewBox="0 0 4 6"><path d="M0 0v6l4-3z" fill="#444"/></svg>
      </div>
      <button type="button" class="mt-3 ml-[640px] block h-[15px] w-[114px] border border-[#9b8650] bg-linear-to-b from-[#fde9a0] to-[#fbd257] leading-3">Set Default Whse</button>
    </div>
    <div class="flex w-[13px] flex-col items-center border-x border-[#cdc7ce] bg-[#ededed]">
      <svg class="my-[5px] h-[3px] w-[6px] shrink-0" viewBox="0 0 6 3"><path d="M0 3h6L3 0z" fill="#555"/></svg>
      <span class="flex w-full flex-1 items-center justify-center border border-[#c4c0c5]"><svg class="h-[6px] w-[4px]" viewBox="0 0 4 6"><path d="M.5 0v6M3 0v6" stroke="#aaa" stroke-dasharray="1 1"/></svg></span>
    </div>
    <div class="w-[5px] border-r border-l border-[#c4c4c4] bg-white"></div>
  </div>
</section>`;

document.getElementById('desktop').innerHTML = head + body + totals +
  itemWindow('top-[154px] left-[119px] h-[423px]') + itemWindow('top-[156px] -left-[56px] h-[427px]');
</script>
</body>
</html>
